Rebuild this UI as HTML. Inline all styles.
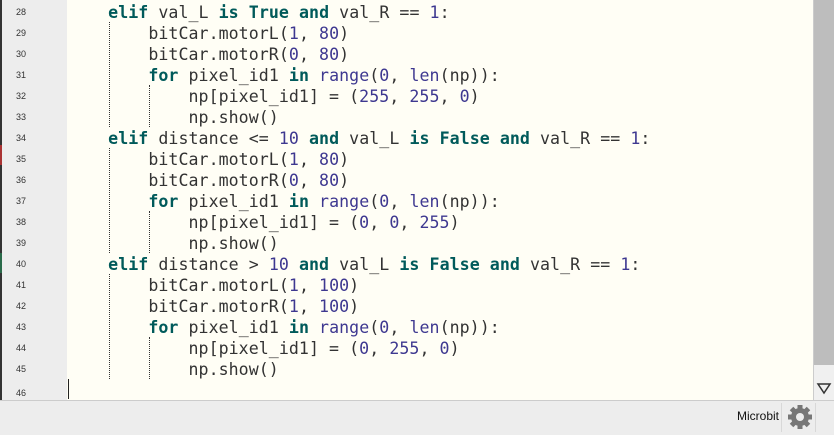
<!DOCTYPE html>
<html><head><style>
body{margin:0;width:834px;height:434px;overflow:hidden;background:#fffef5;font-family:"DejaVu Sans Mono","Liberation Mono",monospace;position:relative}
#strip{position:absolute;left:0;top:0;width:2px;height:400px;background:#333}
#gut{position:absolute;left:2px;top:0;width:65px;height:400px;background:#ededed}
.ln{position:absolute;left:0;width:42px;text-align:center;font:9px "Liberation Sans",sans-serif;color:#333}
.code{position:absolute;left:68px;white-space:pre;font-size:16.6px;color:#333;letter-spacing:0.05px;margin-top:2px}
.k{color:#005a5a;font-weight:bold}
.n{color:#3e3890}
.g{position:absolute;border-left:1px dotted #333;width:0}
#sb{position:absolute;left:813px;top:0;width:21px;height:400px;background:#f0f0f0;border-left:1px solid #ccc}
#thumb{position:absolute;left:814px;top:0;width:20px;height:365px;background:#bdbdbd}
#status{position:absolute;left:0;top:400px;width:834px;height:34px;background:#ededed;border-top:1px solid #ccc}
#cur{position:absolute;left:68px;top:379px;width:1px;height:20px;background:#222}
</style></head><body>
<div id="strip"></div><div id="gut"></div>
<div style="position:absolute;left:0;top:145px;width:2px;height:20px;background:#a33"></div>
<div style="position:absolute;left:0;top:253px;width:2px;height:20px;background:#2a6a4a"></div>
<div class="g" style="left:109px;top:22px;height:105px"></div>
<div class="g" style="left:149px;top:85px;height:42px"></div>
<div class="g" style="left:109px;top:148px;height:105px"></div>
<div class="g" style="left:149px;top:211px;height:42px"></div>
<div class="g" style="left:109px;top:274px;height:105px"></div>
<div class="g" style="left:149px;top:337px;height:42px"></div>
<div id="cur"></div>
<div class="ln" style="top:7px">28</div><div class="code" style="top:1px">    <span class="k">elif</span> val_L <span class="k">is</span> <span class="k">True</span> <span class="k">and</span> val_R == <span class="n">1</span>:</div>
<div class="ln" style="top:28px">29</div><div class="code" style="top:22px">        bitCar.motorL(<span class="n">1</span>, <span class="n">80</span>)</div>
<div class="ln" style="top:49px">30</div><div class="code" style="top:43px">        bitCar.motorR(<span class="n">0</span>, <span class="n">80</span>)</div>
<div class="ln" style="top:70px">31</div><div class="code" style="top:64px">        <span class="k">for</span> pixel_id1 <span class="k">in</span> <span class="n">range</span>(<span class="n">0</span>, <span class="n">len</span>(np)):</div>
<div class="ln" style="top:91px">32</div><div class="code" style="top:85px">            np[pixel_id1] = (<span class="n">255</span>, <span class="n">255</span>, <span class="n">0</span>)</div>
<div class="ln" style="top:112px">33</div><div class="code" style="top:106px">            np.show()</div>
<div class="ln" style="top:133px">34</div><div class="code" style="top:127px">    <span class="k">elif</span> distance &lt;= <span class="n">10</span> <span class="k">and</span> val_L <span class="k">is</span> <span class="k">False</span> <span class="k">and</span> val_R == <span class="n">1</span>:</div>
<div class="ln" style="top:154px">35</div><div class="code" style="top:148px">        bitCar.motorL(<span class="n">1</span>, <span class="n">80</span>)</div>
<div class="ln" style="top:175px">36</div><div class="code" style="top:169px">        bitCar.motorR(<span class="n">0</span>, <span class="n">80</span>)</div>
<div class="ln" style="top:196px">37</div><div class="code" style="top:190px">        <span class="k">for</span> pixel_id1 <span class="k">in</span> <span class="n">range</span>(<span class="n">0</span>, <span class="n">len</span>(np)):</div>
<div class="ln" style="top:217px">38</div><div class="code" style="top:211px">            np[pixel_id1] = (<span class="n">0</span>, <span class="n">0</span>, <span class="n">255</span>)</div>
<div class="ln" style="top:238px">39</div><div class="code" style="top:232px">            np.show()</div>
<div class="ln" style="top:259px">40</div><div class="code" style="top:253px">    <span class="k">elif</span> distance &gt; <span class="n">10</span> <span class="k">and</span> val_L <span class="k">is</span> <span class="k">False</span> <span class="k">and</span> val_R == <span class="n">1</span>:</div>
<div class="ln" style="top:280px">41</div><div class="code" style="top:274px">        bitCar.motorL(<span class="n">1</span>, <span class="n">100</span>)</div>
<div class="ln" style="top:301px">42</div><div class="code" style="top:295px">        bitCar.motorR(<span class="n">1</span>, <span class="n">100</span>)</div>
<div class="ln" style="top:322px">43</div><div class="code" style="top:316px">        <span class="k">for</span> pixel_id1 <span class="k">in</span> <span class="n">range</span>(<span class="n">0</span>, <span class="n">len</span>(np)):</div>
<div class="ln" style="top:343px">44</div><div class="code" style="top:337px">            np[pixel_id1] = (<span class="n">0</span>, <span class="n">255</span>, <span class="n">0</span>)</div>
<div class="ln" style="top:364px">45</div><div class="code" style="top:358px">            np.show()</div>
<div class="ln" style="top:388px">46</div>
<div id="sb"></div><div id="thumb"></div>
<svg style="position:absolute;left:816px;top:381px" width="16" height="14"><path d="M2 3 L14 3 L8 12 Z" fill="none" stroke="#333" stroke-width="1.5"/></svg>
<div id="status"></div>
<div style="position:absolute;left:737px;top:409px;font:12px 'Liberation Sans',sans-serif;color:#111">Microbit</div>
<div style="position:absolute;left:781px;top:403px;width:1px;height:29px;background:#d8d8d8"></div>
<div style="position:absolute;left:815px;top:403px;width:1px;height:29px;background:#d8d8d8"></div>
<svg style="position:absolute;left:787px;top:404px" width="26" height="26" viewBox="0 0 26 26"><g fill="#777"><circle cx="13" cy="13" r="9"/><g id="t"><rect x="10.5" y="1" width="5" height="6"/><rect x="10.5" y="19" width="5" height="6"/></g><use href="#t" transform="rotate(45 13 13)"/><use href="#t" transform="rotate(90 13 13)"/><use href="#t" transform="rotate(135 13 13)"/></g><circle cx="13" cy="13" r="4" fill="#ededed"/></svg>
</body></html>
